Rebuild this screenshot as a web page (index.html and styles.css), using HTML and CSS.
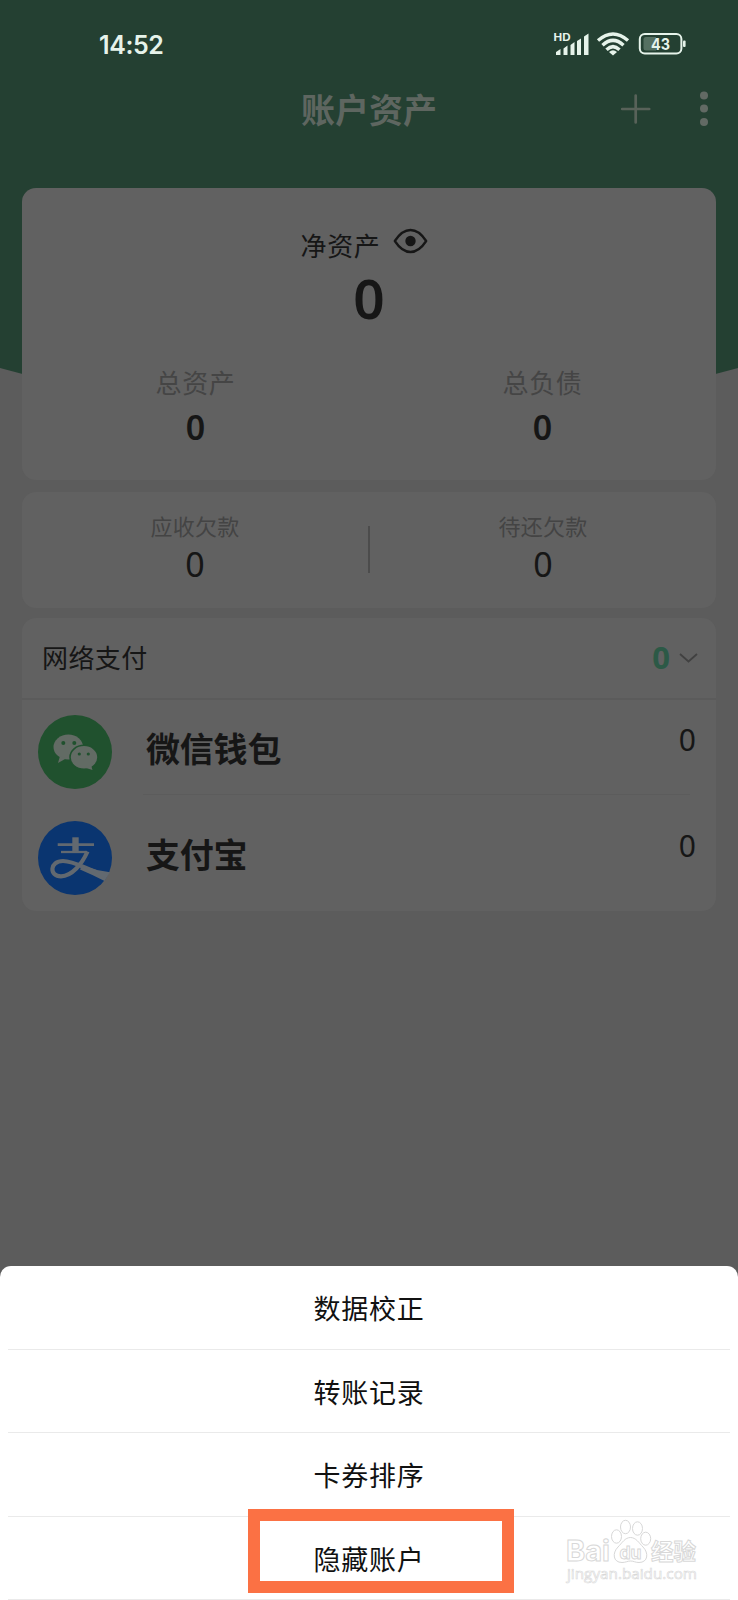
FILE: index.html
```html
<!DOCTYPE html>
<html lang="zh-CN">
<head>
<meta charset="utf-8">
<title>账户资产</title>
<link rel="stylesheet" href="styles.css">
</head>
<body>
<div class="screen">
  <svg class="backdrop" width="738" height="400" viewBox="0 0 738 400"><path d="M0 0H738V368Q715 374.500 690 380H48Q23 374.500 0 368Z" fill="#244032"/></svg>
  <header class="top">
    <div class="status">
      <span class="time">14:52</span>
      <svg class="status-icons" width="136" height="28" viewBox="0 0 136 28" fill="#e6f3ea">
        <text class="hd" x="2.500" y="13" textLength="17" lengthAdjust="spacingAndGlyphs">HD</text>
        <path d="M5 27V24L9.500 21V27ZM12.500 27V20.500L16.500 17.500V27ZM19.500 27V17L23.500 14V27ZM26 27V13L30 10.500V27ZM33 27V8.500L37.500 5.500V27Z"/>
        <g fill="none" stroke="#e6f3ea" stroke-width="3.400">
          <path d="M47 12.500Q62 -.500 77 12.500"/><path d="M51.500 17.300Q62 7.500 72.500 17.300"/><path d="M55.500 21.800Q62 15.500 68.500 21.800"/>
        </g>
        <path d="M58 24Q62 20.500 66 24L62 27.500Z"/>
        <rect x="88.800" y="5.900" width="41.600" height="19.500" rx="5" fill="none" stroke="#e6f3ea" stroke-width="2"/>
        <path d="M95 9H105V22.500H95Q92.500 22.500 92.500 20V11.500Q92.500 9 95 9Z" fill="#557061"/>
        <text class="level" x="100" y="22" textLength="19" lengthAdjust="spacingAndGlyphs">43</text>
        <rect x="132" y="12.500" width="2.600" height="6.500" rx="1"/>
      </svg>
    </div>
    <div class="bar">
      <h1 class="title">账户资产</h1>
      <svg class="actions" width="90" height="40" viewBox="0 0 90 40">
        <path d="M14.200 20H41.200M27.700 6.500V33.500" stroke="#586259" stroke-width="2.700" stroke-linecap="round"/>
        <g fill="#626a64"><circle cx="96" cy="6.500" r="4"/><circle cx="96" cy="19.500" r="4"/><circle cx="96" cy="33" r="4"/></g>
      </svg>
    </div>
  </header>
  <main class="content">
    <section class="card summary">
      <div class="net">
        <span class="label dark">净资产</span>
        <svg class="eye" width="35" height="26" viewBox="0 0 35 26"><path d="M1.800 13Q9 2 17.500 2T33.200 13Q26 24 17.500 24T1.800 13Z" fill="none" stroke="#161616" stroke-width="2.300" stroke-linejoin="round"/><circle cx="17.500" cy="13" r="5.200" fill="#161616"/></svg>
      </div>
      <div class="net-value">0</div>
      <div class="pair">
        <div class="cell"><span class="label">总资产</span><span class="value strong">0</span></div>
        <div class="cell"><span class="label">总负债</span><span class="value strong">0</span></div>
      </div>
    </section>
    <section class="card debts">
      <div class="cell"><span class="label small">应收欠款</span><span class="value">0</span></div>
      <i class="divider"></i>
      <div class="cell"><span class="label small">待还欠款</span><span class="value">0</span></div>
    </section>
    <section class="card accounts">
      <div class="group">
        <span class="label dark">网络支付</span>
        <span class="group-value">0</span>
        <svg class="chevron" width="20" height="12" viewBox="0 0 20 12"><path d="M2 2L10.500 9.500L19 2" fill="none" stroke="#414141" stroke-width="1.800"/></svg>
      </div>
      <div class="account">
        <svg class="logo" width="74" height="74" viewBox="0 0 74 74">
          <circle cx="37" cy="37" r="37" fill="#20512e"/>
          <g fill="#626b64"><ellipse cx="30.300" cy="32" rx="14.800" ry="12.500"/><path d="M22 41L20 48L28 43.500Z"/></g>
          <g fill="#626b64"><ellipse cx="46" cy="42.300" rx="14" ry="12" stroke="#20512e" stroke-width="1.600"/><path d="M48 53L54.500 55L53 50Z"/></g>
          <g fill="#20512e"><circle cx="25.300" cy="28" r="2"/><circle cx="36.300" cy="28" r="2"/><circle cx="41.300" cy="39" r="1.600"/><circle cx="50.300" cy="39" r="1.600"/></g>
        </svg>
        <div class="detail"><span class="name">微信钱包</span><span class="amount">0</span></div>
      </div>
      <div class="account">
        <svg class="logo" width="74" height="74" viewBox="0 0 74 74">
          <circle cx="37" cy="37" r="37" fill="#0a3570"/>
          <g fill="none" stroke="#626970">
            <path d="M19.700 23.700H56" stroke-width="2.700"/><path d="M37.500 16.300V31" stroke-width="6.400"/><path d="M23 31H49" stroke-width="2.300"/>
            <path d="M49.500 30.500C44 43 34 55.300 23 55.300C11 55.300 11.500 40 25 40C36 40 48 48 58 51" stroke-width="4.200"/>
          </g>
          <path d="M44 44.500Q58 49.500 72 51.300L66.500 60Q55 54 42 48.500Z" fill="#626970"/>
        </svg>
        <div class="detail"><span class="name">支付宝</span><span class="amount">0</span></div>
      </div>
    </section>
  </main>
  <nav class="sheet">
    <a class="option">数据校正</a>
    <a class="option">转账记录</a>
    <a class="option">卡券排序</a>
    <a class="option">隐藏账户</a>
  </nav>
  <div class="highlight"></div>
  <svg class="watermark" width="140" height="70" viewBox="0 0 140 70" fill="#fff" stroke="#d8d8d8" stroke-width="1">
    <text class="brand" x="5" y="47" textLength="44" lengthAdjust="spacingAndGlyphs">Bai</text>
    <path d="M69.500 23.500C75 23.500 78 29 82 33C88 39 87 48.500 78 48.500C74 48.500 73 47 69.500 47S65 48.500 61 48.500C52 48.500 51 39 57 33C61 29 64 23.500 69.500 23.500Z"/>
    <ellipse cx="55.500" cy="22.500" rx="5" ry="6.700"/><ellipse cx="64.500" cy="13" rx="5" ry="6.700"/><ellipse cx="76.500" cy="14.500" rx="5" ry="6.700"/><ellipse cx="84.700" cy="24.700" rx="5" ry="6.500"/>
    <text class="brand du" x="58.500" y="44.500" textLength="22" lengthAdjust="spacingAndGlyphs">du</text>
    <text class="brand cn" x="90" y="46" textLength="45" lengthAdjust="spacingAndGlyphs">经验</text>
    <text class="site" x="6" y="65" textLength="130" lengthAdjust="spacingAndGlyphs">jingyan.baidu.com</text>
  </svg>
</div>
</body>
</html>
```
FILE: styles.css
```css
* { box-sizing: border-box; }
body { margin: 0; background: #5c5c5c; }
.screen {
  position: relative; width: 738px; height: 1600px; overflow: hidden;
  background: #5c5c5c; color: #161616;
  font-family: "Noto Sans", "Noto Sans CJK SC", sans-serif;
}
.backdrop { position: absolute; left: 0; top: 0; }
.top { position: relative; height: 188px; padding-top: 28px; }
.status { display: flex; height: 34px; padding: 0 51px 0 99px; justify-content: space-between; align-items: flex-start; }
.time { font: 600 25px/34px "Inter", sans-serif; color: #e6f3ea; letter-spacing: -0.4px; }
.hd { font: 700 10.500px "Inter", sans-serif; }
.level { font: 700 16px "Inter", sans-serif; }
.bar { display: grid; grid-template-columns: 1fr auto 1fr; margin-top: 27px; height: 40px; align-items: center; }
.title { grid-column: 2; margin: -1px 0 0; font: 700 34px/40px "Noto Sans CJK SC", sans-serif; letter-spacing: 0; color: #5e6660; }
.actions { justify-self: end; margin-right: 40px; overflow: visible; }
.content { position: relative; display: flex; flex-direction: column; gap: 11px; padding: 0 22px; }
.card { background: #616161; border-radius: 14px; }
.label { font: 400 26px/34px "Noto Sans CJK SC", sans-serif; letter-spacing: 0.600px; color: #454545; }
.label.dark { color: #161616; }
.label.small { font-size: 22px; line-height: 30px; letter-spacing: 0.300px; color: #444; }
.value { font-size: 34px; line-height: 36px; }
.value.strong { font-weight: 600; }
.cell { flex: 1; display: flex; flex-direction: column; align-items: center; }
.summary { height: 292px; padding-top: 40px; }
.net { display: flex; justify-content: center; gap: 13px; padding-right: 9px; height: 37px; align-items: flex-start; }
.net-value { height: 64px; font-weight: 600; font-size: 55px; line-height: 65px; text-align: center; }
.pair { display: flex; margin-top: 36px; }
.pair .value { margin-top: 10px; }
.debts { display: flex; height: 116px; margin-top: 1px; padding-top: 18px; }
.debts .value { margin-top: 6px; }
.divider { width: 2px; height: 47px; margin-top: 16px; background: #4c4c4c; }
.accounts { height: 293px; margin-top: -1px; }
.group { display: flex; align-items: center; height: 82px; padding: 0 18px 0 20px; border-bottom: 2px solid #5b5b5b; }
.group .label { flex: 1; padding-bottom: 3px; letter-spacing: 0.400px; }
.group-value { font-weight: 700; font-size: 31px; line-height: 36px; color: #2c5946; margin-right: 8px; padding-bottom: 2px; }
.account { display: flex; height: 106px; padding: 15px 26px 0 16px; align-items: flex-start; }
.logo { flex: none; }
.detail { flex: 1; display: flex; align-items: flex-start; justify-content: space-between; height: 80px; margin-left: 31px; border-bottom: 1px solid #5c5c5c; }
.account + .account .detail { border-bottom: 0; }
.name { margin-left: 3px; padding-top: 10px; font: 700 34px/46px "Noto Sans CJK SC", sans-serif; letter-spacing: -0.2px; }
.amount { margin-right: -6px; font-size: 30px; line-height: 49px; }
.sheet { position: absolute; left: 0; top: 1266px; width: 738px; height: 334px; padding: 0 8px; background: #fff; border-radius: 11px 11px 0 0; }
.option { display: block; height: 83.400px; padding-top: 23px; text-align: center; border-bottom: 1px solid #eaeaea; color: #111; font: 400 27px/38px "Noto Sans CJK SC", sans-serif; letter-spacing: 0.800px; }
.option:first-child { height: 84px; }
.highlight { position: absolute; left: 248px; top: 1509px; width: 266px; height: 84px; border: 12px solid #fb7144; }
.watermark { position: absolute; left: 561px; top: 1514px; }
.brand { font: 700 29px "Inter", sans-serif; }
.du { font-size: 18px; }
.cn { font: 700 23px "Noto Sans CJK SC", sans-serif; }
.site { font: 400 15px "Open Sans", sans-serif; stroke-width: .6px; }
```
